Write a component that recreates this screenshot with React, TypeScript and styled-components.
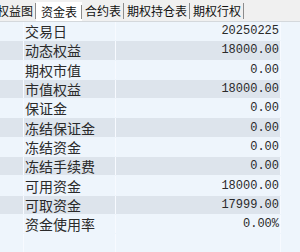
import React from "react";
import styled, { createGlobalStyle } from "styled-components";

const Global = createGlobalStyle`
  html, body { margin: 0; padding: 0; background: #eef5fc; }
  body { font-family: "Noto Sans CJK SC", "Noto Sans", sans-serif; }
`;

const Page = styled.div`
  width: 300px;
  height: 252px;
  overflow: hidden;
  display: flex;
  flex-direction: column;
  background: #eef5fc;
`;

const TabBar = styled.div`
  height: 21px;
  flex: none;
  display: flex;
  align-items: stretch;
  background: #f0f0f0;
  border-bottom: 1px solid #d4d8dc;
  overflow: hidden;
`;

const Tab = styled.div<{ $active?: boolean; $offset?: number }>`
  flex: none;
  display: flex;
  align-items: center;
  padding: 0 ${(p) => (p.$active ? 5 : 3)}px;
  margin-left: ${(p) => p.$offset ?? 0}px;
  margin-top: ${(p) => (p.$active ? 2 : 0)}px;
  font-size: 12px;
  color: #111;
  background: ${(p) => (p.$active ? "#ffffff" : "transparent")};
  position: relative;
  white-space: nowrap;
  &::after {
    content: "";
    position: absolute;
    right: 0;
    top: 3px;
    bottom: 2px;
    width: 1px;
    background: #8c8c8c;
  }
`;

const Table = styled.div`
  flex: 1;
  display: flex;
  flex-direction: column;
`;

const Row = styled.div<{ $alt?: boolean; $fill?: boolean }>`
  display: grid;
  grid-template-columns: 24px 92px 165px 1fr;
  height: ${(p) => (p.$fill ? "auto" : "19.3px")};
  flex: ${(p) => (p.$fill ? 1 : "none")};
  border-bottom: ${(p) => (p.$fill ? "none" : "1px solid transparent")};
  box-sizing: border-box;
`;

const Cell = styled.div<{ $alt?: boolean; $plain?: boolean; $num?: boolean }>`
  background: ${(p) => (p.$alt && !p.$plain ? "#dde4ec" : "#eef5fc")};
  border-right: 1px solid ${(p) => (p.$plain ? "transparent" : "#f7faff")};
  display: flex;
  align-items: center;
  justify-content: ${(p) => (p.$num ? "flex-end" : "flex-start")};
  padding: ${(p) => (p.$num ? "0 1px 0 0" : "0 0 0 1px")};
  font-family: ${(p) =>
    p.$num
      ? '"Liberation Mono", "DejaVu Sans Mono", monospace'
      : '"Noto Sans CJK SC", "Noto Sans", sans-serif'};
  font-size: ${(p) => (p.$num ? "12px" : "14px")};
  color: #2a2a2a;
  white-space: nowrap;
  overflow: hidden;
`;

const rows: [string, string][] = [
  ["交易日", "20250225"],
  ["动态权益", "18000.00"],
  ["期权市值", "0.00"],
  ["市值权益", "18000.00"],
  ["保证金", "0.00"],
  ["冻结保证金", "0.00"],
  ["冻结资金", "0.00"],
  ["冻结手续费", "0.00"],
  ["可用资金", "18000.00"],
  ["可取资金", "17999.00"],
  ["资金使用率", "0.00%"],
];

const tabs = ["权益图", "资金表", "合约表", "期权持仓表", "期权行权"];

export default function App() {
  return (
    <Page>
      <Global />
      <TabBar>
        {tabs.map((t, i) => (
          <Tab key={t} $active={i === 1} $offset={i === 0 ? -6 : 0}>
            {t}
          </Tab>
        ))}
      </TabBar>
      <Table>
        {rows.map(([label, value], i) => {
          const alt = i % 2 === 1;
          return (
            <Row key={label}>
              <Cell $alt={alt} />
              <Cell $alt={alt}>{label}</Cell>
              <Cell $alt={alt} $num>
                {value}
              </Cell>
              <Cell $plain />
            </Row>
          );
        })}
        <Row $fill>
          <Cell />
          <Cell />
          <Cell />
          <Cell $plain />
        </Row>
      </Table>
    </Page>
  );
}
